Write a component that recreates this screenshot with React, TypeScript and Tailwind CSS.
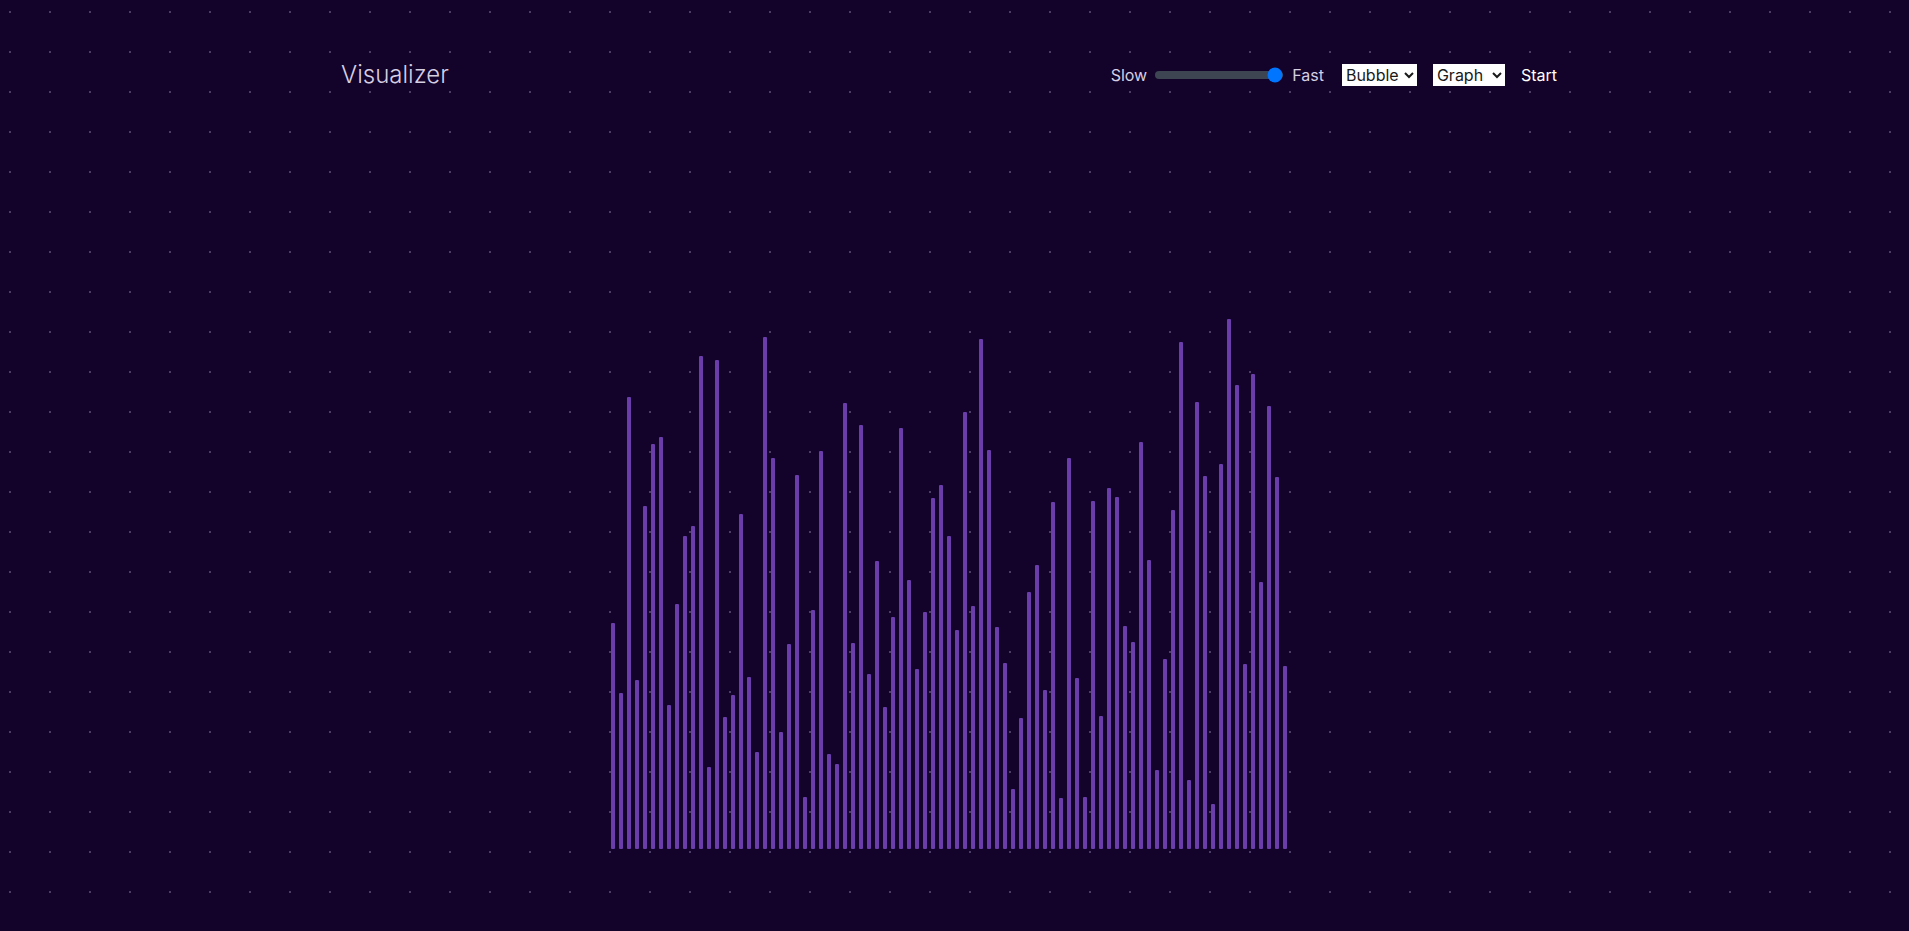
import React, { useState } from 'react'

const heights = [
  226, 156, 452, 169, 343, 405, 412, 144, 245, 313, 323, 493, 82, 489, 132, 154, 335, 172, 97, 512,
  391, 117, 205, 374, 52, 239, 398, 95, 85, 446, 206, 424, 175, 288, 142, 232, 421, 269, 180, 237,
  351, 364, 313, 219, 437, 243, 510, 399, 222, 186, 60, 131, 257, 284, 159, 347, 51, 391, 171, 52,
  348, 133, 361, 352, 223, 207, 407, 289, 79, 190, 339, 507, 69, 447, 373, 45, 385, 530, 464, 185,
  475, 267, 443, 372, 183,
]

export default function App() {
  const [speed, setSpeed] = useState(100)
  const [algo, setAlgo] = useState('bubble')
  const [view, setView] = useState('graph')

  return (
    <div
      className="min-h-screen bg-[#130229] bg-[radial-gradient(circle,#4a3d66_1px,transparent_1.3px)] bg-[length:40px_40px] bg-[position:-10px_-8px] pr-[11px] text-[#d5cfe3]"
      style={{ fontFamily: 'Inter, "Noto Sans", sans-serif' }}
    >
      <header className="mx-auto flex max-w-7xl items-center justify-between px-8 pt-[59px]">
        <h1 className="text-2xl font-light leading-8">Visualizer</h1>
        <div className="flex items-center text-base">
          <span>Slow</span>
          <input
            type="range"
            min={1}
            max={100}
            value={speed}
            onChange={(e) => setSpeed(Number(e.target.value))}
            className="ml-2 mr-[9px] h-2 w-32 cursor-pointer appearance-none rounded-lg bg-[#3d4452]"
          />
          <span>Fast</span>
          <select
            value={algo}
            onChange={(e) => setAlgo(e.target.value)}
            className="ml-[18px] h-[22px] w-[75px] bg-white text-[#1a1a1a]"
          >
            <option value="bubble">Bubble</option>
            <option value="quick">Quick</option>
            <option value="merge">Merge</option>
          </select>
          <select
            value={view}
            onChange={(e) => setView(e.target.value)}
            className="ml-4 h-[22px] w-[72px] bg-white text-[#1a1a1a]"
          >
            <option value="graph">Graph</option>
            <option value="tree">Tree</option>
          </select>
          <button className="ml-4 text-white">Start</button>
        </div>
      </header>

      <main className="mt-[158px] flex h-[600px] items-end justify-center">
        {heights.map((h, i) => (
          <div key={i} className="mx-0.5 w-1 rounded-[1px] bg-[#6a3dab]" style={{ height: h }} />
        ))}
      </main>
    </div>
  )
}
